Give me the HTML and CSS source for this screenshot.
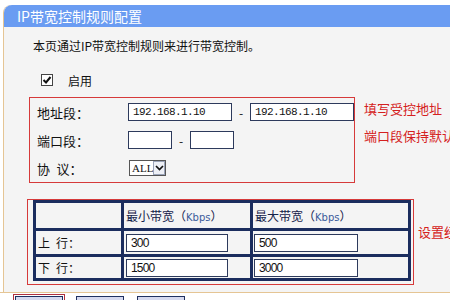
FILE: index.html
```html
<!DOCTYPE html>
<html lang="zh-CN">
<head>
    <meta charset="UTF-8">
    <meta name="viewport" content="width=device-width, initial-scale=1.0">
    <title>IP带宽控制规则配置</title>
    <link rel="stylesheet" href="styles.css">
</head>
<body>
    <div class="panel">
        <div class="panel-title">IP带宽控制规则配置</div>
        <div class="panel-body">
            <p class="intro">本页通过IP带宽控制规则来进行带宽控制。</p>

            <label class="enable">
                <span class="check">
                    <svg width="10" height="10" viewBox="0 0 10 10"><path d="M1.5 5 L4 7.5 L8.5 2" fill="none" stroke="#111" stroke-width="2"/></svg>
                </span>
                启用
            </label>

            <!-- 地址 / 端口 / 协议 -->
            <div class="group">
                <div class="box box-addr">
                    <div class="row">
                        <span class="label">地址段：</span>
                        <input class="field ip" type="text" value="192.168.1.10">
                        <span class="dash">-</span>
                        <input class="field ip" type="text" value="192.168.1.10">
                    </div>
                    <div class="row">
                        <span class="label">端口段：</span>
                        <input class="field port" type="text">
                        <span class="dash">-</span>
                        <input class="field port" type="text">
                    </div>
                    <div class="row">
                        <span class="label">协&ensp;议：</span>
                        <span class="select">
                            <span class="select-value">ALL</span>
                            <span class="select-arrow">
                                <svg width="9" height="6" viewBox="0 0 9 6"><polyline points="1,1 4.5,4.5 8,1" fill="none" stroke="#111" stroke-width="1.7"/></svg>
                            </span>
                        </span>
                    </div>
                </div>
                <div class="hints">
                    <p>填写受控地址</p>
                    <p>端口段保持默认设置</p>
                </div>
            </div>

            <!-- 带宽 -->
            <div class="group group-rate">
                <div class="box box-rate">
                    <table class="rate-table">
                        <colgroup>
                            <col class="col-name">
                            <col class="col-min">
                            <col class="col-max">
                        </colgroup>
                        <tr class="head">
                            <td></td>
                            <td>最小带宽（<span class="unit">Kbps</span>）</td>
                            <td>最大带宽（<span class="unit">Kbps</span>）</td>
                        </tr>
                        <tr class="up">
                            <td>上&ensp;行：</td>
                            <td><input class="field rate rate-min" type="text" value="300"></td>
                            <td><input class="field rate rate-max" type="text" value="500"></td>
                        </tr>
                        <tr class="down">
                            <td>下&ensp;行：</td>
                            <td><input class="field rate rate-min" type="text" value="1500"></td>
                            <td><input class="field rate rate-max" type="text" value="3000"></td>
                        </tr>
                    </table>
                </div>
                <div class="hints hints-rate">
                    <p>设置经过的带宽范围</p>
                </div>
            </div>
        </div>
    </div>

    <div class="actions">
        <button class="btn btn-focus">保 存</button>
        <button class="btn">返 回</button>
        <button class="btn">帮 助</button>
    </div>
</body>
</html>
```

FILE: styles.css
```css
* {
    box-sizing: border-box;
    margin: 0;
    padding: 0;
}

body {
    width: 450px;
    height: 300px;
    overflow: hidden;
    background-color: #fff;
    font-family: "Noto Sans CJK SC", sans-serif;
    font-size: 12px;
    color: #111;
}

.panel {
    margin: 5px 0 0 3px;
    border-left: 1px solid #e5c594;
    border-top-left-radius: 8px;
    background-color: #f4f4f4;
}

.panel-title {
    height: 22px;
    line-height: 22px;
    padding-left: 13px;
    background-color: #6a9cf2;
    color: #fff;
    font-size: 14px;
    border-top-left-radius: 8px;
}

.panel-body {
    padding: 11px 0 7px 25px;
}

.intro {
    padding-left: 4px;
    line-height: 16px;
}

.enable {
    display: flex;
    align-items: center;
    gap: 15px;
    height: 16px;
    margin: 18px 0 9px 12px;
}

.check {
    display: flex;
    align-items: center;
    justify-content: center;
    width: 12px;
    height: 12px;
    border: 1px solid #444;
    background-color: #fff;
}

.group {
    display: flex;
    align-items: flex-start;
}

.box {
    border: 1px solid #d63a3a;
}

.box-addr {
    width: 327px;
    padding-left: 7px;
}

.row {
    display: flex;
    align-items: center;
    height: 28px;
}

.label {
    width: 91px;
    font-size: 13px;
}

.field {
    height: 18px;
    border: 1px solid #2d3a5c;
    background-color: #fff;
    padding-left: 4px;
    color: #111;
    outline: none;
}

.ip,
.port {
    font-family: "Liberation Mono", monospace;
    font-size: 11px;
    letter-spacing: -0.6px;
}

.ip {
    width: 104px;
}

.port {
    width: 44px;
}

.dash {
    width: 18px;
    text-align: center;
}

.select {
    display: flex;
    width: 37px;
    height: 16px;
    margin-left: 1px;
    border: 1px solid #555;
    background-color: #fff;
}

.select-value {
    flex: 1;
    padding-left: 2px;
    line-height: 14px;
    font-family: "Liberation Serif", serif;
    font-size: 11px;
}

.select-arrow {
    display: flex;
    align-items: center;
    justify-content: center;
    width: 15px;
    border: 1px solid #9aa3b8;
    background-color: #eef0f6;
}

.hints {
    margin: -2px 0 0 9px;
    color: #d42020;
    font-size: 13px;
    line-height: 27px;
    white-space: nowrap;
}

.group-rate {
    margin: 16px 0 0 -2px;
}

.box-rate {
    width: 387px;
    padding: 0 2px 3px 5px;
}

.hints-rate {
    margin: 25px 0 0 4px;
    line-height: 16px;
}

.rate-table {
    width: 378px;
    table-layout: fixed;
    border-collapse: separate;
    border-spacing: 3px;
    background-color: #1b2d5e;
}

.col-name {
    width: 85px;
}

.col-min {
    width: 126px;
}

.col-max {
    width: 155px;
}

.rate-table td {
    padding: 0 0 0 2px;
    background-color: #f4f4f4;
    white-space: nowrap;
    color: #111;
}

.rate-table .head td {
    height: 25px;
    color: #14224a;
}

.rate-table .up td {
    height: 23px;
}

.rate-table .down td {
    height: 21px;
}

.unit {
    color: #3a5a9a;
    font-family: "DejaVu Sans", sans-serif;
    font-size: 10px;
}

.rate {
    display: block;
    font-family: "Liberation Sans", sans-serif;
    font-size: 12px;
    letter-spacing: -0.8px;
}

.rate-min {
    width: 102px;
}

.rate-max {
    width: 104px;
    margin-left: -1px;
}

.actions {
    display: flex;
    gap: 13px;
    border-top: 1px solid #e5c594;
    padding: 3px 0 0 15px;
}

.btn {
    width: 48px;
    height: 20px;
    border: 1px solid #1f3060;
    background-color: #d5d9ef;
    font-family: "Noto Sans CJK SC", sans-serif;
    font-size: 12px;
}

.btn-focus {
    outline: 1px solid #b03040;
    outline-offset: 1px;
}
```
